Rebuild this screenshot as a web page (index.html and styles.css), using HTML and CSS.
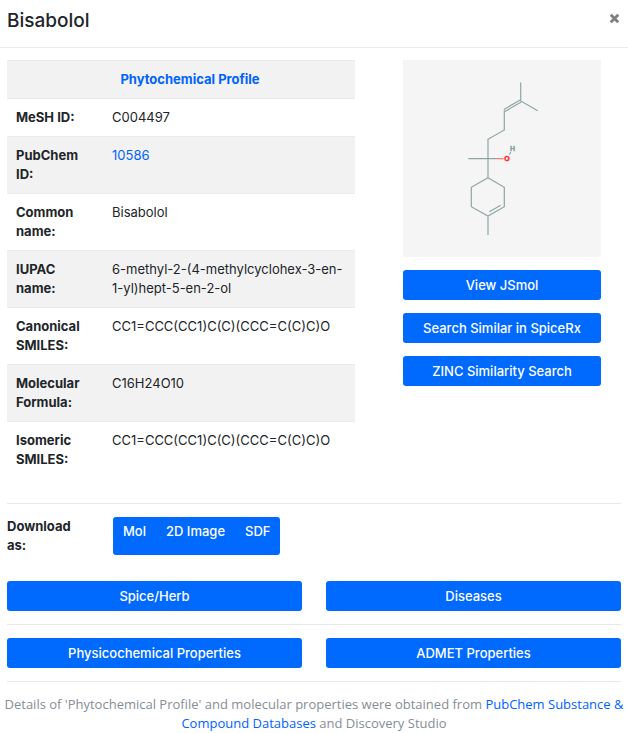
FILE: index.html
```
<!DOCTYPE html>
<html lang="en">
<head>
<meta charset="utf-8">
<meta name="viewport" content="width=device-width, initial-scale=1">
<title>Bisabolol</title>
<link rel="stylesheet" href="styles.css">
</head>
<body>
<header class="modal-header">
  <h1 class="modal-title">Bisabolol</h1>
  <button class="close" type="button" aria-label="Close">
    <svg class="close-icon" viewBox="0 0 10 10" aria-hidden="true"><path d="M1.6 1.6 8.4 8.4M8.4 1.6 1.6 8.4"/></svg>
  </button>
</header>
<main class="modal-body">
  <section class="overview">
    <table class="profile">
      <colgroup><col class="label-col"><col></colgroup>
      <thead>
        <tr><th class="profile-heading" colspan="2" scope="colgroup">Phytochemical Profile</th></tr>
      </thead>
      <tbody>
        <tr><th scope="row">MeSH ID:</th><td>C004497</td></tr>
        <tr><th scope="row">PubChem ID:</th><td><a href="#">10586</a></td></tr>
        <tr><th scope="row">Common name:</th><td>Bisabolol</td></tr>
        <tr><th scope="row">IUPAC name:</th><td>6-methyl-2-(4-methylcyclohex-3-en-1-yl)hept-5-en-2-ol</td></tr>
        <tr><th scope="row">Canonical SMILES:</th><td>CC1=CCC(CC1)C(C)(CCC=C(C)C)O</td></tr>
        <tr><th scope="row">Molecular Formula:</th><td>C16H24O10</td></tr>
        <tr><th scope="row">Isomeric SMILES:</th><td>CC1=CCC(CC1)C(C)(CCC=C(C)C)O</td></tr>
      </tbody>
    </table>
    <div class="structure">
      <svg class="molecule" viewBox="0 0 198 197" role="img" aria-label="Bisabolol structure">
        <g class="bonds">
          <path d="M117.7 22.5V41L134.7 50.7"/>
          <path d="M117.2 40 100.9 49.4M118.2 42 102 51.4"/>
          <path d="M101.3 50.3V70L85 79.3V117.7M65.3 98.7H94"/>
          <path d="M85 117.7 101.3 127.3V146.7L85 156 68.3 146.7V127.3ZM85 156V175M86.3 151.7 97.7 145.3"/>
          <path d="M106.5 94.5 107.8 92"/>
        </g>
        <path class="oxygen-bond" d="M94 98.7H100.5"/>
        <text class="atom oxygen" x="104" y="101">O</text>
        <text class="atom hydrogen" x="109.5" y="91">H</text>
      </svg>
      <button class="btn" type="button">View JSmol</button>
      <button class="btn" type="button">Search Similar in SpiceRx</button>
      <button class="btn" type="button">ZINC Similarity Search</button>
    </div>
  </section>
  <hr>
  <section class="download">
    <h2 class="download-label">Download as:</h2>
    <div class="btn-group">
      <button class="group-item" type="button">Mol</button>
      <button class="group-item" type="button">2D Image</button>
      <button class="group-item" type="button">SDF</button>
    </div>
  </section>
  <div class="btn-row">
    <button class="btn" type="button">Spice/Herb</button>
    <button class="btn" type="button">Diseases</button>
  </div>
  <hr>
  <div class="btn-row">
    <button class="btn" type="button">Physicochemical Properties</button>
    <button class="btn" type="button">ADMET Properties</button>
  </div>
  <hr>
</main>
<footer class="source">Details of 'Phytochemical Profile' and molecular properties were obtained from <a href="#">PubChem Substance &amp; Compound Databases</a> and Discovery Studio</footer>
</body>
</html>
```
FILE: styles.css
```
*, *::before, *::after { box-sizing: border-box; }

body {
  margin: 0;
  background: #fff;
  color: #212529;
  font: 13px/19px Inter, "Liberation Sans", sans-serif;
}

a { color: #0062ff; text-decoration: none; }
button { margin: 0; border: 0; font: inherit; cursor: pointer; }

.modal-header {
  display: flex;
  align-items: flex-start;
  justify-content: space-between;
  padding: 9px 7px 14px;
  border-bottom: 1px solid #e9ecef;
}
.modal-title { margin: 0; font-size: 19px; line-height: 24px; font-weight: 500; }
.close { display: flex; padding: 4px 1px; background: none; }
.close-icon { width: 11px; height: 11px; fill: none; stroke: #7f7f7f; stroke-width: 2.6; }

.modal-body { padding: 12px 7px 0; }

.overview {
  display: grid;
  grid-template-columns: 348fr 198fr;
  gap: 48px;
  align-items: start;
  padding: 0 20px 25px 0;
}

.profile { width: 100%; border-collapse: separate; border-spacing: 0; table-layout: fixed; }
.label-col { width: 96px; }
.profile th, .profile td {
  padding: 9px;
  border-top: 1px solid #e9ecef;
  text-align: left;
  vertical-align: top;
}
.profile th { font-weight: 700; }
.profile .profile-heading { padding-left: 27px; text-align: center; color: #0062ff; }
.profile thead tr, .profile tbody tr:nth-child(even) { background: #f2f2f2; }

.structure { display: grid; gap: 13px; }
.molecule { display: block; width: 100%; background: #f5f5f5; }
.bonds { fill: none; stroke: #8fa5a5; stroke-width: 1.2; }
.oxygen-bond { stroke: #ff7070; stroke-width: 1.2; }
.atom { font: 700 7px "Liberation Sans", sans-serif; text-anchor: middle; }
.oxygen { fill: #f22; stroke: #f22; stroke-width: 0.4; }
.hydrogen { fill: #7f9c9c; stroke: #7f9c9c; stroke-width: 0.3; }

.btn {
  width: 100%;
  padding: 6px 10px 5px;
  border-radius: 3px;
  background: #006aff;
  color: #fff;
  font-weight: 500;
}

hr { margin: 0 0 13px; border: 0; border-top: 1px solid #e8e8e8; }

.download { display: flex; gap: 26px; margin-bottom: 26px; }
.download-label { width: 80px; margin: 0; font-size: 13px; line-height: 19px; font-weight: 700; }
.btn-group { display: flex; border-radius: 3px; background: #006aff; }
.group-item {
  display: flex;
  padding: 5px 10px;
  background: none;
  color: #fff;
  font-weight: 500;
}

.btn-row { display: grid; grid-template-columns: 1fr 1fr; gap: 24px; margin-bottom: 13px; }

.source { padding: 0 4px; text-align: center; color: #868e96; font-family: "Open Sans", "Liberation Sans", sans-serif; }
```
